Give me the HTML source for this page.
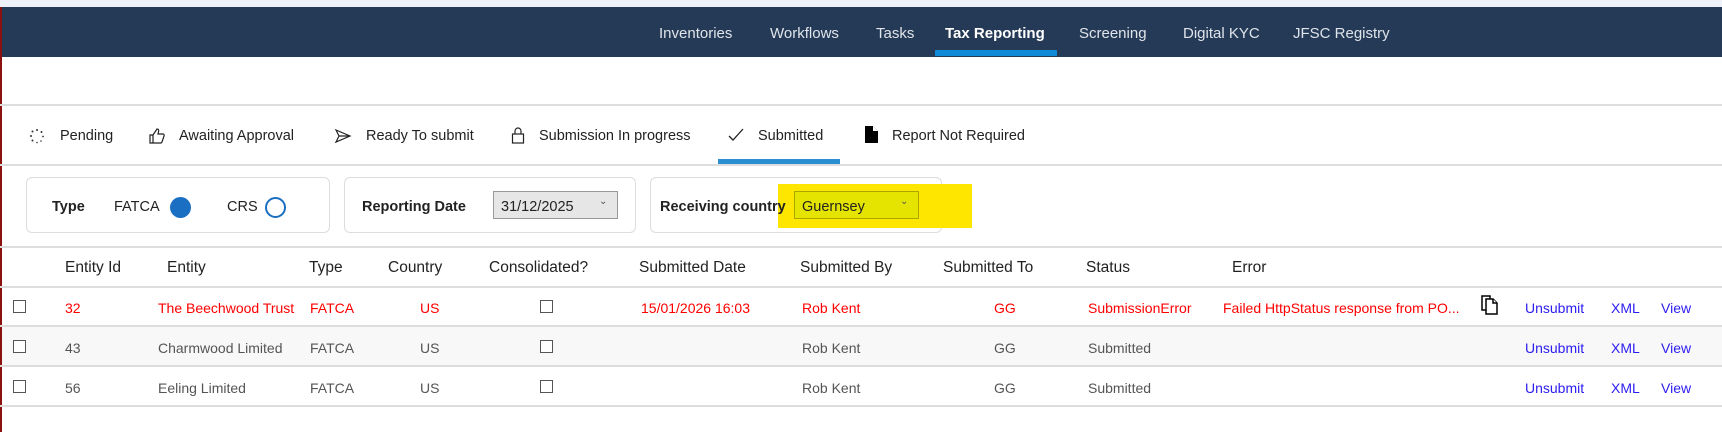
<!DOCTYPE html>
<html><head><meta charset="utf-8"><style>
*{margin:0;padding:0;box-sizing:border-box}
body{width:1722px;height:432px;overflow:hidden;background:#fff;font-family:"Liberation Sans",sans-serif;position:relative;color:#222}
.a{position:absolute;white-space:nowrap}
.nav{left:0;top:7px;width:1722px;height:50px;background:#253a56}
.ni{color:#dfe4ea;font-size:15px;top:25px}
.tab{font-size:14.5px;top:128px;color:#222}
.line{position:absolute;left:0;width:1722px;height:2px;background:#ddd}
.card{position:absolute;top:177px;height:56px;border:1px solid #ddd;border-radius:6px;background:#fff}
.ft{font-size:14.5px;top:199px}
.th{font-size:15.5px;top:259px;color:#222}
.td{font-size:14px;color:#555}
.red{color:#f00}
.lnk{color:#2b1cf0}
.cb{position:absolute;width:13px;height:13px;border:1px solid #555;background:#fff}
</style></head><body>
<div class="a" style="left:0;top:0;width:1722px;height:7px;background:#eef2f8"></div>
<div class="a nav"></div>
<div class="a" style="left:0;top:7px;width:2px;height:425px;background:#8b1010"></div>
<div class="a ni" style="left:659px">Inventories</div>
<div class="a ni" style="left:770px">Workflows</div>
<div class="a ni" style="left:876px">Tasks</div>
<div class="a ni" style="left:945px;color:#fff;font-weight:bold">Tax Reporting</div>
<div class="a ni" style="left:1079px">Screening</div>
<div class="a ni" style="left:1183px">Digital KYC</div>
<div class="a ni" style="left:1293px">JFSC Registry</div>
<div class="a" style="left:935px;top:50px;width:122px;height:6px;background:#0f8ad6"></div>

<div class="line" style="top:104px"></div>
<!-- tabs -->
<svg class="a" style="left:29px;top:128px" width="16" height="16" viewBox="0 0 16 16" fill="#333"><circle cx="8" cy="2" r="1"/><circle cx="12.5" cy="4" r="1"/><circle cx="14" cy="8.5" r=".9"/><circle cx="12" cy="13" r=".8"/><circle cx="8" cy="14.5" r=".8"/><circle cx="3.5" cy="12.5" r="1"/><circle cx="2" cy="8" r="1"/><circle cx="3.5" cy="3.5" r="1"/></svg>
<div class="a tab" style="left:60px">Pending</div>
<svg class="a" style="left:148px;top:127px" width="18" height="18" viewBox="0 0 18 18" fill="none" stroke="#222" stroke-width="1.2"><path d="M2 8h3v8H2zM5 8l4-6c1.5 0 2 1 1.5 3L10 7h5c1 0 1.5 1 1 2l-2 6c-.3.7-1 1-1.5 1H5"/></svg>
<div class="a tab" style="left:179px">Awaiting Approval</div>
<svg class="a" style="left:334px;top:128px" width="18" height="16" viewBox="0 0 18 16" fill="none" stroke="#222" stroke-width="1.2"><path d="M2 2l14 6-14 6 3-6zM5 8h11"/></svg>
<div class="a tab" style="left:366px">Ready To submit</div>
<svg class="a" style="left:511px;top:126px" width="14" height="18" viewBox="0 0 14 18" fill="none" stroke="#222" stroke-width="1.2"><rect x="1.5" y="8" width="11" height="9"/><path d="M4 8V5a3 3 0 0 1 6 0v3"/></svg>
<div class="a tab" style="left:539px">Submission In progress</div>
<svg class="a" style="left:728px;top:128px" width="16" height="14" viewBox="0 0 16 14" fill="none" stroke="#222" stroke-width="1.3"><path d="M1 8l4 4 10-11"/></svg>
<div class="a tab" style="left:758px">Submitted</div>
<svg class="a" style="left:865px;top:126px" width="13" height="17" viewBox="0 0 13 17"><path d="M0 0h8l5 5v12H0z" fill="#000"/><path d="M8 0v5h5" fill="#fff"/></svg>
<div class="a tab" style="left:892px">Report Not Required</div>
<div class="a" style="left:718px;top:159px;width:122px;height:5px;background:#2a8fd2"></div>
<div class="line" style="top:164px"></div>

<!-- filter cards -->
<div class="card" style="left:26px;width:304px"></div>
<div class="card" style="left:344px;width:292px"></div>
<div class="card" style="left:650px;width:292px"></div>
<div class="a ft" style="left:52px;font-weight:bold">Type</div>
<div class="a ft" style="left:114px">FATCA</div>
<div class="a" style="left:170px;top:197px;width:21px;height:21px;border-radius:50%;background:#1b6fc2"></div>
<div class="a ft" style="left:227px">CRS</div>
<div class="a" style="left:265px;top:197px;width:21px;height:21px;border-radius:50%;border:2px solid #1b6fc2"></div>
<div class="a ft" style="left:362px;font-weight:bold">Reporting Date</div>
<div class="a" style="left:493px;top:191px;width:125px;height:28px;background:#e6e6e6;border:1px solid #999"></div>
<div class="a ft" style="left:501px">31/12/2025</div>
<div class="a" style="left:599px;top:196px;font-size:10px;color:#555">&#8964;</div>
<div class="a" style="left:778px;top:184px;width:194px;height:44px;background:#ffe600"></div>
<div class="a ft" style="left:660px;font-weight:bold">Receiving country</div>
<div class="a" style="left:794px;top:191px;width:125px;height:28px;background:#e4e400;border:1px solid #a8a800"></div>
<div class="a ft" style="left:802px;color:#222">Guernsey</div>
<div class="a" style="left:900px;top:196px;font-size:10px;color:#555">&#8964;</div>

<div class="line" style="top:246px"></div>
<!-- header -->
<div class="a th" style="left:65px">Entity Id</div>
<div class="a th" style="left:167px">Entity</div>
<div class="a th" style="left:309px">Type</div>
<div class="a th" style="left:388px">Country</div>
<div class="a th" style="left:489px">Consolidated?</div>
<div class="a th" style="left:639px">Submitted Date</div>
<div class="a th" style="left:800px">Submitted By</div>
<div class="a th" style="left:943px">Submitted To</div>
<div class="a th" style="left:1086px">Status</div>
<div class="a th" style="left:1232px">Error</div>
<div class="line" style="top:286px"></div>

<!-- row1 -->
<div class="cb" style="left:13px;top:300px"></div>
<div class="a td red" style="left:65px;top:300px">32</div>
<div class="a td red" style="left:158px;top:300px">The Beechwood Trust</div>
<div class="a td red" style="left:310px;top:300px">FATCA</div>
<div class="a td red" style="left:420px;top:300px">US</div>
<div class="cb" style="left:540px;top:300px"></div>
<div class="a td red" style="left:641px;top:300px">15/01/2026 16:03</div>
<div class="a td red" style="left:802px;top:300px">Rob Kent</div>
<div class="a td red" style="left:994px;top:300px">GG</div>
<div class="a td red" style="left:1088px;top:300px">SubmissionError</div>
<div class="a td red" style="left:1223px;top:300px">Failed HttpStatus response from PO...</div>
<svg class="a" style="left:1481px;top:295px" width="18" height="20" viewBox="0 0 18 20" fill="#fff" stroke="#000" stroke-width="1.5"><path d="M1 1h8v14H1z"/><path d="M5 4h7l4 4v11H5z"/><path d="M12 4v4h4"/></svg>
<div class="a td lnk" style="left:1525px;top:300px">Unsubmit</div>
<div class="a td lnk" style="left:1611px;top:300px">XML</div>
<div class="a td lnk" style="left:1661px;top:300px">View</div>
<svg class="a" style="left:1210px;top:324px" width="290" height="10"><path d="M3 3L287 6" stroke="#3a0bb8" stroke-width="4" stroke-linecap="round"/></svg>
<div class="line" style="top:325px"></div>

<!-- row2 -->
<div class="a" style="left:2px;top:327px;width:1720px;height:38px;background:#f8f8f8"></div>
<div class="cb" style="left:13px;top:340px"></div>
<div class="a td" style="left:65px;top:340px">43</div>
<div class="a td" style="left:158px;top:340px">Charmwood Limited</div>
<div class="a td" style="left:310px;top:340px">FATCA</div>
<div class="a td" style="left:420px;top:340px">US</div>
<div class="cb" style="left:540px;top:340px"></div>
<div class="a td" style="left:802px;top:340px">Rob Kent</div>
<div class="a td" style="left:994px;top:340px">GG</div>
<div class="a td" style="left:1088px;top:340px">Submitted</div>
<div class="a td lnk" style="left:1525px;top:340px">Unsubmit</div>
<div class="a td lnk" style="left:1611px;top:340px">XML</div>
<div class="a td lnk" style="left:1661px;top:340px">View</div>
<div class="line" style="top:365px"></div>

<!-- row3 -->
<div class="cb" style="left:13px;top:380px"></div>
<div class="a td" style="left:65px;top:380px">56</div>
<div class="a td" style="left:158px;top:380px">Eeling Limited</div>
<div class="a td" style="left:310px;top:380px">FATCA</div>
<div class="a td" style="left:420px;top:380px">US</div>
<div class="cb" style="left:540px;top:380px"></div>
<div class="a td" style="left:802px;top:380px">Rob Kent</div>
<div class="a td" style="left:994px;top:380px">GG</div>
<div class="a td" style="left:1088px;top:380px">Submitted</div>
<div class="a td lnk" style="left:1525px;top:380px">Unsubmit</div>
<div class="a td lnk" style="left:1611px;top:380px">XML</div>
<div class="a td lnk" style="left:1661px;top:380px">View</div>
<div class="line" style="top:405px"></div>
</body></html>
